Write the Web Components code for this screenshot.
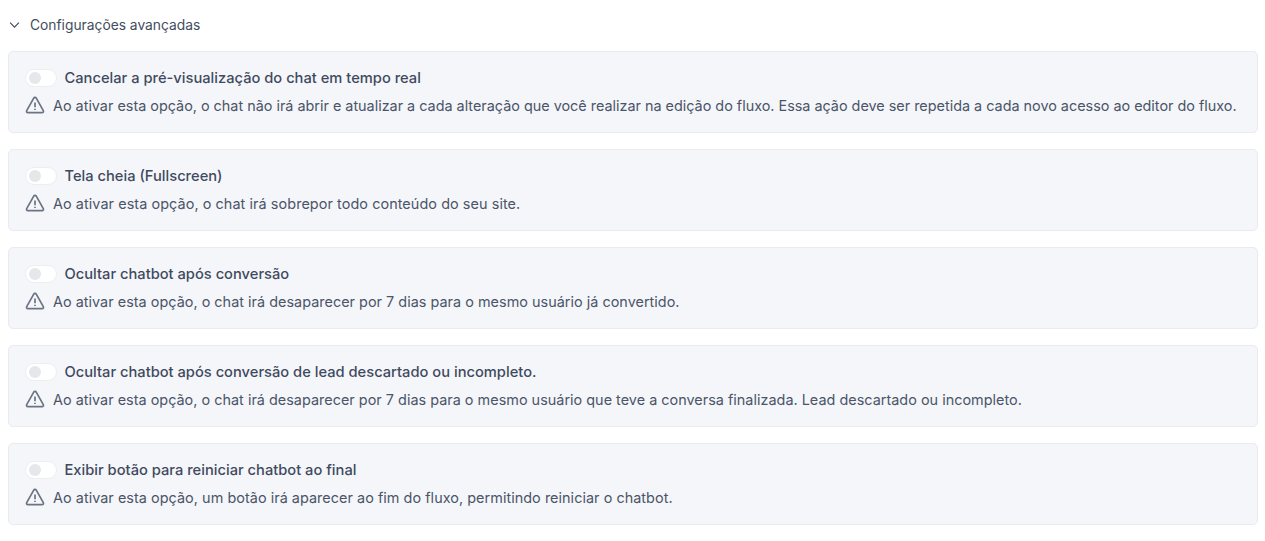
<!DOCTYPE html>
<html lang="pt"><head><meta charset="utf-8"><style>
html,body{margin:0;background:#fff}
body{font-family:Inter,"Liberation Sans",sans-serif;color:#3f4a5e}
</style></head><body>
<adv-panel title-text="Configurações avançadas">
<option-card style="--t:-.011px" label="Cancelar a pré-visualização do chat em tempo real" text="Ao ativar esta opção, o chat não irá abrir e atualizar a cada alteração que você realizar na edição do fluxo. Essa ação deve ser repetida a cada novo acesso ao editor do fluxo."></option-card>
<option-card style="--t:.07px" label="Tela cheia (Fullscreen)" text="Ao ativar esta opção, o chat irá sobrepor todo conteúdo do seu site."></option-card>
<option-card style="--t:.02px" label="Ocultar chatbot após conversão" text="Ao ativar esta opção, o chat irá desaparecer por 7 dias para o mesmo usuário já convertido."></option-card>
<option-card style="--t:.014px" label="Ocultar chatbot após conversão de lead descartado ou incompleto." text="Ao ativar esta opção, o chat irá desaparecer por 7 dias para o mesmo usuário que teve a conversa finalizada. Lead descartado ou incompleto."></option-card>
<option-card style="--t:.04px" label="Exibir botão para reiniciar chatbot ao final" text="Ao ativar esta opção, um botão irá aparecer ao fim do fluxo, permitindo reiniciar o chatbot."></option-card>
</adv-panel>
<script>
class AdvPanel extends HTMLElement{constructor(){super();this.attachShadow({mode:'open'}).innerHTML=`<style>
:host{display:block;padding:16px 7px 0 8px}
.h{display:flex;align-items:center;height:19px;gap:10px;padding-left:1px;margin-bottom:16px;font-size:13.8px;color:#424d60}
.h span{padding-bottom:2px}
svg{width:11px;height:11px;flex:none}
.l{display:flex;flex-direction:column;gap:16px}
</style><div class="h"><svg viewBox="0 0 12 12" fill="none" stroke="#424d60" stroke-width="1.3"><path d="M1.2 2.8 6 7.8l4.8-5"/></svg><span id="t"></span></div><div class="l"><slot></slot></div>`;
this.shadowRoot.getElementById('t').textContent=this.getAttribute('title-text')}}
class OptionToggle extends HTMLElement{constructor(){super();this.attachShadow({mode:'open'}).innerHTML=`<style>
:host{display:block;width:32px;height:18px;box-sizing:border-box;border-radius:9px;background:#fff;border:1px solid #edeef2;padding:2px 3px;flex:none}
i{display:block;width:12px;height:12px;border-radius:50%;background:#e6e7eb}
</style><i></i>`}}
class OptionCard extends HTMLElement{constructor(){super();this.attachShadow({mode:'open'}).innerHTML=`<style>
:host{display:block;box-sizing:border-box;height:82px;background:#f5f6fa;border:1px solid #e9ebf0;border-radius:5px;padding:17px 16px 0}
.r{display:flex;align-items:center;gap:7.5px;height:18px;font-size:14.7px;font-weight:450;color:#3f4a5e}
.w{display:flex;align-items:center;gap:8px;height:20px;margin-top:8px;font-size:14.41px;letter-spacing:var(--t,0);color:#4a5568;white-space:nowrap}
svg{width:20px;height:20px;flex:none}
</style><div class="r"><option-toggle></option-toggle><span id="a"></span></div>
<div class="w"><svg viewBox="0 0 20 20" fill="none" stroke="#6b7484" stroke-width="1.7" stroke-linejoin="round"><path d="M8.6 3.3 1.7 15.6a1.4 1.4 0 0 0 1.2 2.1h14.2a1.4 1.4 0 0 0 1.2-2.1L11.4 3.3a1.6 1.6 0 0 0-2.8 0z"/><path d="M10 7.6v4.6M10 13.8v1.2"/></svg><span id="b"></span></div>`;
this.shadowRoot.getElementById('a').textContent=this.getAttribute('label');
this.shadowRoot.getElementById('b').textContent=this.getAttribute('text')}}
customElements.define('option-toggle',OptionToggle);
customElements.define('option-card',OptionCard);
customElements.define('adv-panel',AdvPanel);
</script></body></html>
